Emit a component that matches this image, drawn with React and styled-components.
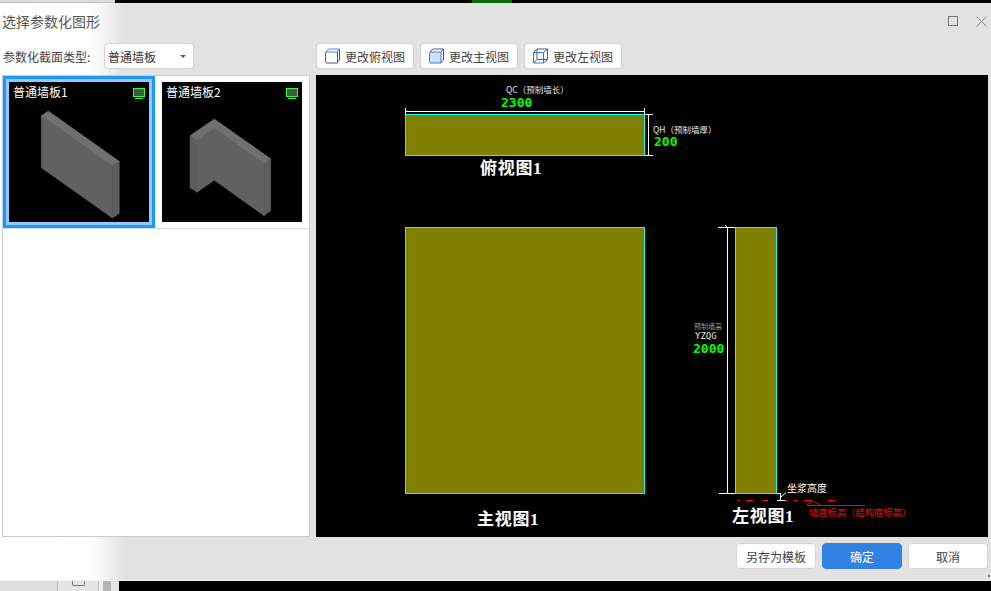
import styled, { createGlobalStyle } from "styled-components";

const GlobalStyle = createGlobalStyle`
  html, body {
    margin: 0;
    padding: 0;
    background: #000;
    overflow: hidden;
  }
  body {
    font-family: "Noto Sans CJK SC", "Liberation Sans", sans-serif;
  }
`;

const Page = styled.div`
  width: 991px;
  height: 591px;
  display: flex;
  flex-direction: column;
  background: #000;
`;

const TopStrip = styled.div`
  height: 3px;
  display: flex;
  background: #000;
`;

const StripLeft = styled.div`
  width: 115px;
  background: #dcdcdc;
  border-bottom: 1px solid #bdbdbd;
  box-sizing: border-box;
`;

const StripGreen = styled.div`
  width: 40px;
  margin-left: 357px;
  background: #0b6a0b;
`;

const Dialog = styled.div`
  position: relative;
  height: 577px;
  flex: none;
  display: flex;
  flex-direction: column;
  background: linear-gradient(90deg, #fff 0, #fdfdfd 92px, #e2e2e2 125px);
  border-bottom: 1px solid #f2f2f2;
`;

const TitleBar = styled.div`
  height: 40px;
  box-sizing: border-box;
  padding: 0 4px 4px 2px;
  display: flex;
  align-items: center;
  justify-content: space-between;
`;

const Title = styled.div`
  font-size: 14px;
  color: #555;
`;

const WindowButtons = styled.div`
  display: flex;
  align-items: center;
  gap: 17px;
`;

const Toolbar = styled.div`
  display: grid;
  grid-template-columns: 308px 672px;
  column-gap: 6px;
  padding-left: 2px;
  height: 26px;
  margin-bottom: 6px;
`;

const ToolbarLeft = styled.div`
  display: flex;
  align-items: center;
`;

const FieldLabel = styled.label`
  width: 102px;
  padding-left: 1px;
  box-sizing: border-box;
  font-size: 12px;
  color: #444;
  white-space: nowrap;
`;

const SelectBox = styled.div`
  width: 90px;
  height: 26px;
  box-sizing: border-box;
  padding: 0 7px 0 3px;
  display: flex;
  align-items: center;
  justify-content: space-between;
  background: #fff;
  border: 1px solid #d4d4d4;
  border-radius: 4px;
  font-size: 12px;
  color: #333;
`;

const Caret = styled.span`
  width: 0;
  height: 0;
  border-left: 3px solid transparent;
  border-right: 3px solid transparent;
  border-top: 3px solid #555;
`;

const ViewButtons = styled.div`
  display: flex;
  gap: 6px;
`;

const ViewButton = styled.button`
  width: 98px;
  height: 26px;
  padding: 0 0 0 8px;
  display: flex;
  align-items: center;
  gap: 5px;
  background: #fff;
  border: 1px solid #d4d4d4;
  border-radius: 4px;
  font-family: inherit;
  font-size: 12px;
  color: #444;
`;

const Body = styled.div`
  display: grid;
  grid-template-columns: 308px 672px;
  column-gap: 6px;
  padding-left: 2px;
  height: 462px;
`;

const ListPanel = styled.div`
  background: #fff;
  border: 1px solid #ccc;
  box-sizing: border-box;
`;

const CardRow = styled.div`
  display: flex;
  gap: 1px;
  border-bottom: 1px solid #ddd;
`;

const Card = styled.div`
  width: 152px;
  height: 152px;
  box-sizing: border-box;
  padding: 3px;
  border: 3px solid ${(p) => (p.$selected ? "#1a98fb" : "transparent")};
  background: ${(p) => (p.$selected ? "#93c9fb" : "transparent")};
`;

const Thumb = styled.div`
  position: relative;
  width: 140px;
  height: 140px;
  background: #000;
`;

const ThumbLabel = styled.div`
  position: absolute;
  left: 4px;
  top: 1px;
  font-size: 12px;
  color: #fff;
`;

const ThumbMonitor = styled.svg`
  position: absolute;
  right: 4px;
  top: 6px;
`;

const Canvas = styled.svg`
  display: block;
  width: 672px;
  height: 462px;
  background: #000;
`;

const Footer = styled.div`
  display: flex;
  justify-content: flex-end;
  gap: 6px;
  padding: 6px 3px 0 0;
`;

const FooterButton = styled.button`
  width: 80px;
  height: 26px;
  padding: 0;
  border-radius: 4px;
  border: 1px solid ${(p) => (p.$primary ? "#2f82e4" : "#d4d4d4")};
  background: ${(p) => (p.$primary ? "#2f82e4" : "#fff")};
  color: ${(p) => (p.$primary ? "#fff" : "#444")};
  font-family: inherit;
  font-size: 12px;
`;

const ResizeDot = styled.div`
  position: absolute;
  right: 1px;
  bottom: 3px;
  width: 2px;
  height: 2px;
  background: #777;
`;

const BottomStrip = styled.div`
  flex: 1;
  display: flex;
  background: #000;
`;

const StatusCell = styled.div`
  width: ${(p) => p.$w}px;
  background: ${(p) => p.$bg};
  border-right: ${(p) => (p.$line ? "1px solid #bcbcbc" : "none")};
  box-sizing: border-box;
  display: flex;
  justify-content: center;
`;

const StatusCheck = styled.div`
  width: 13px;
  height: 5px;
  box-sizing: border-box;
  border: 1px solid #777;
  border-top: none;
  border-radius: 0 0 2px 2px;
`;

const Cad = {
  title: { fontFamily: '"Liberation Serif", "Noto Sans CJK SC", serif', fontSize: 17, fill: "#fff", fontWeight: 700, letterSpacing: 0.7 },
  small: { fontFamily: '"Noto Sans CJK SC", sans-serif', fontSize: 8.5, fill: "#e4e4e4" },
  num: { fontFamily: '"DejaVu Sans Mono", monospace', fontSize: 13, fontWeight: 700, fill: "#00ff00" },
};

const TopFaceIcon = () => (
  <svg width="15" height="16" viewBox="0 0 15 16">
    <path d="M.5 5.5Q.5 3.5 2 3.5H11Q12.5 3.5 12.5 5V15H2Q.5 15 .5 13.5Z" fill="#fff" stroke="#4e5a78" />
    <path d="M1 4 4 1H14.5L12 4Z" fill="#fff" stroke="#3f86e8" />
    <path d="M14.5 1V12L12.5 14" fill="none" stroke="#4e5a78" />
  </svg>
);

const FrontFaceIcon = () => (
  <svg width="15" height="16" viewBox="0 0 15 16">
    <path d="M.5 5.5Q.5 4 2 4H11Q12 4 12 5V15H2Q.5 15 .5 13.5Z" fill="#cfe1fb" stroke="#2f7be6" />
    <path d="M1 4 4 1H14.5L12 4" fill="none" stroke="#4e5a78" />
    <path d="M14.5 1V12L12 14.5" fill="none" stroke="#4e5a78" />
  </svg>
);

const SideFaceIcon = () => (
  <svg width="15" height="16" viewBox="0 0 15 16">
    <path d="M.5 4.5H10.5V15H.5Z" fill="none" stroke="#2f7be6" />
    <path d="M.5 4.5 4 1H14.5V11.5L10.5 15" fill="none" stroke="#4e5a78" />
    <path d="M10.5 4.5 14.5 1M4 1V11.5H14.5M4 11.5.5 15" fill="none" stroke="#4e5a78" />
  </svg>
);

const Monitor = () => (
  <ThumbMonitor width="12" height="11" viewBox="0 0 12 11">
    <rect x=".5" y=".5" width="11" height="8" fill="#3c5a3c" stroke="#35ff35" />
    <path d="M2 10.5H10" stroke="#35ff35" />
  </ThumbMonitor>
);

const WallOne = () => (
  <svg width="140" height="140" viewBox="9 82 140 140">
    <polygon points="41.3,115.7 112.3,165.7 112.3,218 41.3,167.7" fill="#616161" stroke="#616161" strokeWidth=".5" />
    <polygon points="112.3,165.7 119.3,161.3 119.3,213.5 112.3,218" fill="#5e5e5e" stroke="#5e5e5e" strokeWidth=".5" />
    <polygon points="41.3,115.7 48.3,111 119.3,161.3 112.3,165.7" fill="#707070" stroke="#707070" strokeWidth=".5" />
  </svg>
);

const WallTwo = () => (
  <svg width="140" height="140" viewBox="162 82 140 140">
    <polygon points="197,140.3 214.3,128.3 264,163.7 264,215.7 214.3,180.3 197,192.3" fill="#616161" stroke="#616161" strokeWidth=".5" />
    <polygon points="190,135.7 197,140.3 197,192.3 190,187.7" fill="#5e5e5e" stroke="#5e5e5e" strokeWidth=".5" />
    <polygon points="264,163.7 270.7,158.7 270.7,210.7 264,215.7" fill="#5e5e5e" stroke="#5e5e5e" strokeWidth=".5" />
    <polygon points="190,135.7 214.3,119 270.7,158.7 264,163.7 214.3,128.3 197,140.3" fill="#707070" stroke="#707070" strokeWidth=".5" />
  </svg>
);

const Drawing = () => (
  <Canvas viewBox="316 75 672 462">
    {/* top view */}
    <rect x="405.5" y="114.5" width="239" height="41" fill="#808000" stroke="#00ffff" />
    <g stroke="#fff" fill="none">
      <path d="M405 111.5H645" />
      <path d="M405.5 108V115M644.5 108V115" />
      <path d="M645 114.5H653M645 155.5H653M648.5 114V156" />
    </g>
    <text x="506" y="93" style={Cad.small}>QC（预制墙长）</text>
    <text x="501" y="107" style={Cad.num}>2300</text>
    <text x="653" y="133" style={Cad.small}>QH（预制墙厚）</text>
    <text x="654" y="146" style={Cad.num}>200</text>
    <text x="480" y="174" style={Cad.title}>俯视图1</text>

    {/* front view */}
    <rect x="405.5" y="227.5" width="239" height="266" fill="#808000" stroke="#00ffff" />
    <text x="477" y="525" style={Cad.title}>主视图1</text>

    {/* left view */}
    <rect x="735.5" y="227.5" width="41" height="266" fill="#808000" stroke="#00ffff" />
    <g stroke="#fff" fill="none">
      <path d="M718 227.5H735M719 493.5H735M727.5 227V494M725 225L727 227" />
      <path d="M777 493.5H781M780.5 494V500M777 500.5H785M781 497L786 492.5" />
    </g>
    <text x="694" y="329" style={{ ...Cad.small, fontSize: 7, fill: "#9a9a9a" }}>预制墙高</text>
    <text x="695" y="339" style={{ ...Cad.small, fontSize: 9, fontFamily: '"DejaVu Sans Mono", monospace' }}>YZQG</text>
    <text x="693" y="353" style={Cad.num}>2000</text>
    <text x="732" y="522" style={Cad.title}>左视图1</text>
    <text x="787" y="492" style={{ ...Cad.small, fontSize: 10, fill: "#fff" }}>坐浆高度</text>
    <path d="M737 500.5H740M746 500.5H753M762 500.5H768M785 500.5H787M793 500.5H797M803 500.5H812M828 500.5H835" stroke="#ff0000" />
    <path d="M807 505.5H865M807 505 813 501 820 505" stroke="#ff0000" fill="none" />
    <text x="809" y="516" style={{ ...Cad.small, fontSize: 9.3, fill: "#ff0000" }}>墙底标高（结构底标高）</text>
  </Canvas>
);

export default function App() {
  return (
    <Page>
      <GlobalStyle />
      <TopStrip>
        <StripLeft />
        <StripGreen />
      </TopStrip>
      <Dialog>
        <TitleBar>
          <Title>选择参数化图形</Title>
          <WindowButtons>
            <svg width="11" height="11" viewBox="0 0 11 11">
              <rect x=".5" y=".5" width="9" height="9" fill="none" stroke="#777" />
            </svg>
            <svg width="11" height="11" viewBox="0 0 11 11">
              <path d="M.5.5 10.5 10.5M10.5.5 .5 10.5" stroke="#888" fill="none" />
            </svg>
          </WindowButtons>
        </TitleBar>
        <Toolbar>
          <ToolbarLeft>
            <FieldLabel>参数化截面类型:</FieldLabel>
            <SelectBox>
              普通墙板
              <Caret />
            </SelectBox>
          </ToolbarLeft>
          <ViewButtons>
            <ViewButton><TopFaceIcon />更改俯视图</ViewButton>
            <ViewButton><FrontFaceIcon />更改主视图</ViewButton>
            <ViewButton><SideFaceIcon />更改左视图</ViewButton>
          </ViewButtons>
        </Toolbar>
        <Body>
          <ListPanel>
            <CardRow>
              <Card $selected>
                <Thumb>
                  <WallOne />
                  <ThumbLabel>普通墙板1</ThumbLabel>
                  <Monitor />
                </Thumb>
              </Card>
              <Card>
                <Thumb>
                  <WallTwo />
                  <ThumbLabel>普通墙板2</ThumbLabel>
                  <Monitor />
                </Thumb>
              </Card>
            </CardRow>
          </ListPanel>
          <Drawing />
        </Body>
        <Footer>
          <FooterButton>另存为模板</FooterButton>
          <FooterButton $primary>确定</FooterButton>
          <FooterButton>取消</FooterButton>
        </Footer>
        <ResizeDot />
      </Dialog>
      <BottomStrip>
        <StatusCell $w={58} $bg="#dedede" $line />
        <StatusCell $w={41} $bg="#e4e4e4" $line><StatusCheck /></StatusCell>
        <StatusCell $w={4} $bg="#efefef" />
        <StatusCell $w={8} $bg="#b4b4b4" />
        <StatusCell $w={8} $bg="#e4e4e4" />
      </BottomStrip>
    </Page>
  );
}
